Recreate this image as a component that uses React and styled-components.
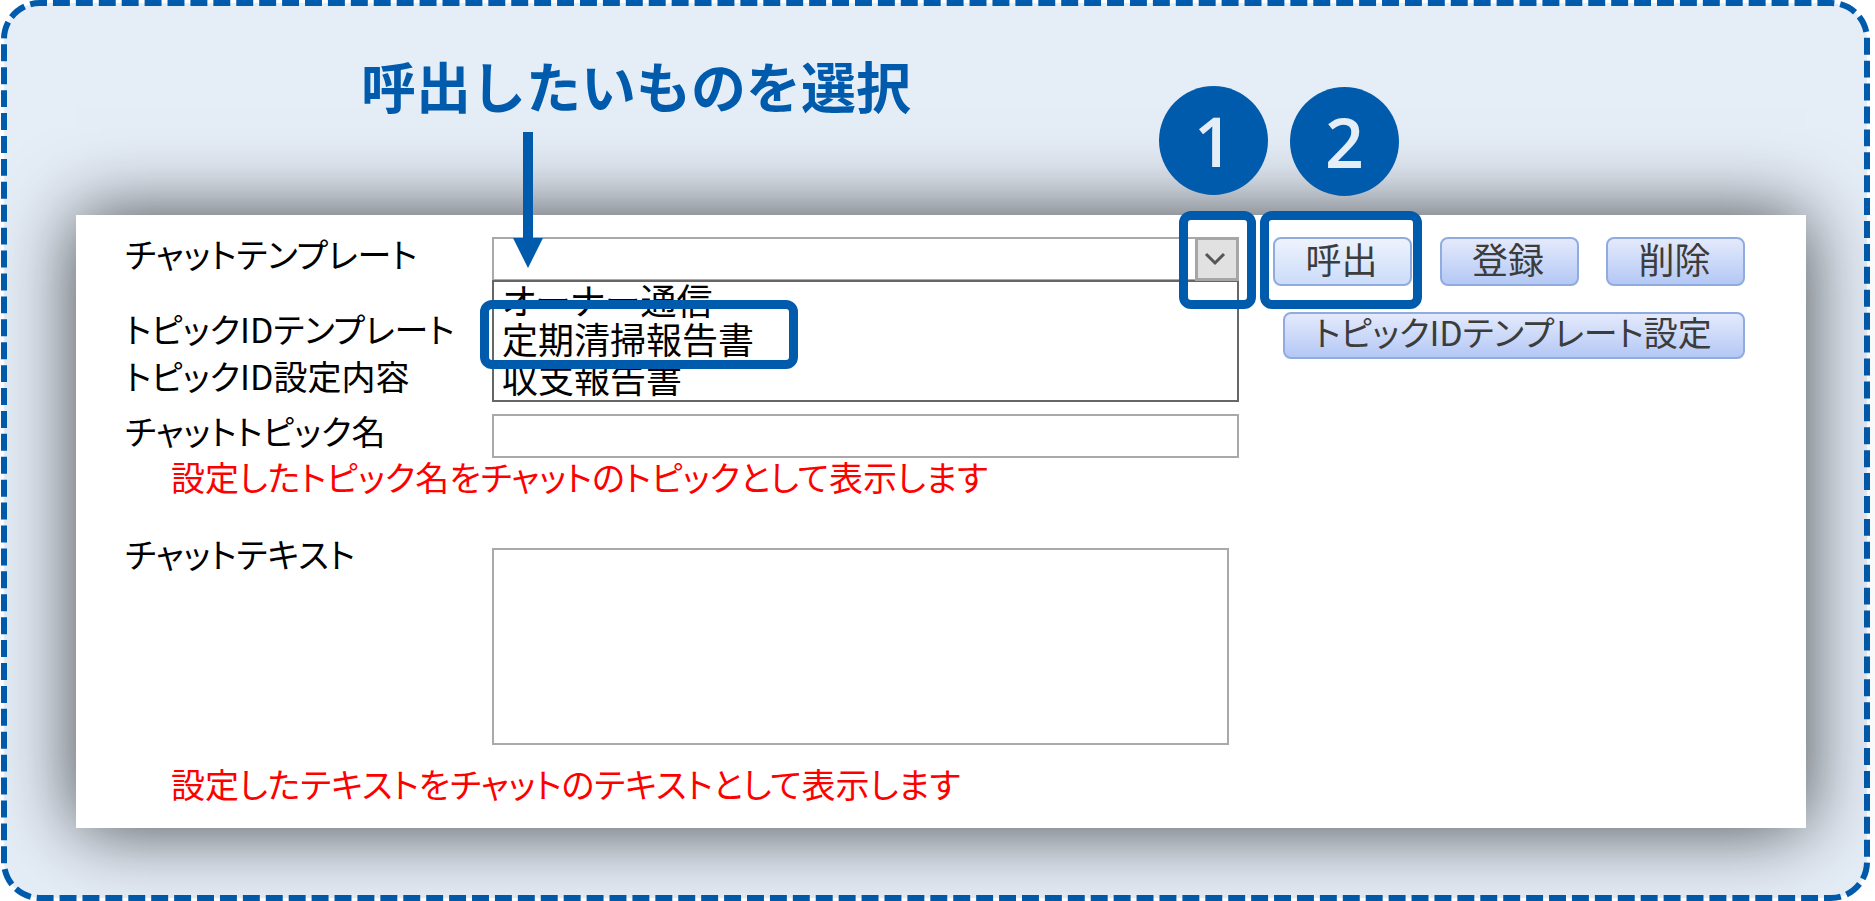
import React from "react";
import styled, { createGlobalStyle, css } from "styled-components";

const BLUE = "#005bac";
const PALE = "#e5edf7";

const GlobalStyle = createGlobalStyle`
  *, *::before, *::after { box-sizing: border-box; }
  body {
    margin: 0;
    background: #fff;
    font-family: "Noto Sans CJK JP", "Liberation Sans", sans-serif;
  }
`;

const Page = styled.main`
  position: relative;
  min-height: 100vh;
  padding: 0 69px 73px 76px;
`;

const Frame = styled.svg`
  position: absolute;
  inset: 0;
  width: 100%;
  height: 100%;

  rect {
    x: 4px;
    y: 3px;
    width: calc(100% - 12px);
    height: calc(100% - 6px);
    rx: 36px;
    fill: ${PALE};
    stroke: ${BLUE};
    stroke-width: 6px;
    stroke-dasharray: 17 6;
    stroke-dashoffset: 10;
  }
`;

const Heading = styled.h1`
  position: relative;
  margin: 0;
  padding: 48px 0 95px 285px;
  font-size: 55px;
  font-weight: 700;
  line-height: 72px;
  color: ${BLUE};
`;

const Card = styled.form`
  position: relative;
  padding: 22px 61px 27px 49px;
  background: #fff;
  box-shadow: 0 0 72px rgba(0, 0, 0, 0.7);
  font-size: 34px;
  line-height: 34px;
  font-feature-settings: "palt";
  color: #000;
`;

const Row = styled.div`
  display: grid;
  grid-template-columns: 367px minmax(0, 1fr) 472px;
  align-items: start;
  margin-top: ${(p) => p.$gap || 0}px;
`;

const Label = styled.label`
  white-space: nowrap;
`;

const RowTitle = styled.span`
  white-space: nowrap;
`;

const Field = styled.div`
  position: relative;
  margin-right: 34px;
`;

const boxed = css`
  display: block;
  width: 100%;
  margin: 0;
  border: 2px solid #a9a9a9;
  border-radius: 0;
  background: #fff;
  font: inherit;
  color: inherit;
  outline: none;
`;

const Select = styled.select`
  ${boxed}
  appearance: none;
  height: 44px;
  padding: 0 50px 0 10px;
`;

const TextInput = styled.input`
  ${boxed}
  height: 44px;
  padding: 0 10px;
`;

const TextArea = styled.textarea`
  ${boxed}
  width: calc(100% - 10px);
  height: 197px;
  margin-top: 11px;
  padding: 4px 10px;
  resize: none;
`;

const ArrowBox = styled.span`
  position: absolute;
  top: 0;
  right: 0;
  width: 44px;
  height: 44px;
  padding-right: 4px;
  display: grid;
  place-items: center;
  border: 3px solid #a6a6a6;
  background: #e1e1e1;
  pointer-events: none;
`;

const Menu = styled.ul`
  position: absolute;
  top: 43px;
  left: 0;
  right: 0;
  margin: 0;
  padding: 0 8px 1px;
  border: 2px solid #666;
  background: #fff;
  list-style: none;
  font-size: 36px;
`;

const Option = styled.li`
  position: relative;
  width: max-content;
  margin-bottom: 5px;
`;

const Actions = styled.div`
  display: flex;
  justify-content: space-between;
  align-items: flex-start;
`;

const ActionSlot = styled.div`
  position: relative;
`;

const Button = styled.button`
  display: block;
  width: ${(p) => (p.$wide ? 462 : 139)}px;
  height: ${(p) => (p.$wide ? 47 : 49)}px;
  margin: 0;
  padding: 0 2px 8px 0;
  justify-self: end;
  border: 2px solid #8fabe0;
  border-radius: 8px;
  background: ${(p) =>
    p.$active
      ? "linear-gradient(#eef3fd, #cbdcfa)"
      : "linear-gradient(#e4eafc, #b4c8f5)"};
  font: inherit;
  font-size: ${(p) => (p.$wide ? 34 : 36)}px;
  font-feature-settings: inherit;
  color: #3c3c3c;
  white-space: nowrap;
`;

const Note = styled.p`
  margin: ${(p) => p.$gap}px 0 0 46px;
  color: #f00;
`;

/* Highlight outline drawn over the control it belongs to */
const Outline = styled.span`
  position: absolute;
  z-index: 1;
  inset: ${(p) => p.$inset};
  border: 9px solid ${BLUE};
  border-radius: 12px;
  pointer-events: none;
`;

const Badge = styled.span`
  position: absolute;
  z-index: 1;
  top: ${(p) => p.$top}px;
  left: ${(p) => p.$left}px;
  width: 109px;
  height: 109px;
  display: grid;
  place-items: center;
  border-radius: 50%;
  background: ${BLUE};
  color: ${PALE};
  font-family: "Open Sans", sans-serif;
  font-size: 68px;
  font-weight: 600;
  line-height: 1;
  pointer-events: none;
`;

const Pointer = styled.svg`
  position: absolute;
  z-index: 1;
  top: -105px;
  left: 21px;
  pointer-events: none;
`;

export default function App() {
  return (
    <Page>
      <GlobalStyle />
      <Frame aria-hidden="true">
        <rect pathLength="5474" />
      </Frame>

      <Heading>呼出したいものを選択</Heading>

      <Card onSubmit={(e) => e.preventDefault()}>
        <Row>
          <Label htmlFor="template">チャットテンプレート</Label>
          <Field>
            <Select id="template" defaultValue="">
              <option value="" />
              <option>オーナー通信</option>
              <option>定期清掃報告書</option>
              <option>収支報告書</option>
            </Select>
            <Menu>
              <Option>オーナー通信</Option>
              <Option>
                定期清掃報告書
                <Outline $inset="-21px -44px -14px -22px" />
              </Option>
              <Option>収支報告書</Option>
            </Menu>
            <ArrowBox>
              <svg width="22" height="14" viewBox="0 0 22 14" fill="none">
                <path d="M2 2l9 9 9-9" stroke="#555" strokeWidth="3" />
              </svg>
              <Outline $inset="-29px -20px -31px -19px" />
              <Badge $top={-154} $left={-39}>1</Badge>
            </ArrowBox>
            <Pointer width="30" height="136" viewBox="0 0 30 136" fill={BLUE}>
              <path d="M10 0h10v106h10L15 136 0 106h10z" />
            </Pointer>
          </Field>
          <Actions>
            <ActionSlot>
              <Button type="button" $active>呼出</Button>
              <Outline $inset="-26px -10px -23px -13px" />
              <Badge $top={-150} $left={17}>2</Badge>
            </ActionSlot>
            <Button type="button">登録</Button>
            <Button type="button">削除</Button>
          </Actions>
        </Row>

        <Row $gap={26}>
          <RowTitle>トピックIDテンプレート</RowTitle>
          <span />
          <Button type="button" $wide>トピックIDテンプレート設定</Button>
        </Row>
        <Row>
          <RowTitle>トピックID設定内容</RowTitle>
        </Row>

        <Row $gap={21}>
          <Label htmlFor="topic">チャットトピック名</Label>
          <Field>
            <TextInput id="topic" type="text" />
          </Field>
        </Row>
        <Note $gap={2}>設定したトピック名をチャットのトピックとして表示します</Note>

        <Row $gap={43}>
          <Label htmlFor="text">チャットテキスト</Label>
          <Field>
            <TextArea id="text" />
          </Field>
        </Row>
        <Note $gap={22}>設定したテキストをチャットのテキストとして表示します</Note>
      </Card>
    </Page>
  );
}
